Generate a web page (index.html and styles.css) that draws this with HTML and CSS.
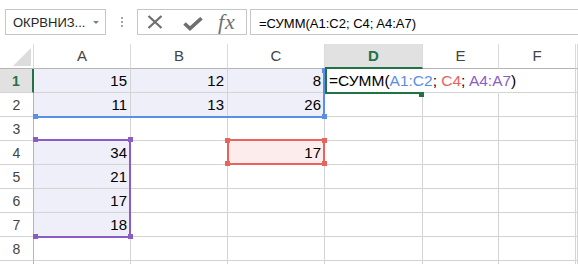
FILE: index.html
```html
<!DOCTYPE html>
<html lang="ru">
<head>
  <meta charset="UTF-8">
  <title>СУММ</title>
  <link rel="stylesheet" href="styles.css">
</head>
<body>
  <div class="fbar">
    <div class="namebox"><span>ОКРВНИЗ...</span><i class="arrow"></i></div>
    <div class="grip"><i></i><i></i><i></i></div>
    <div class="fxbox">
      <svg class="ico-x" width="16" height="14" viewBox="0 0 16 14"><path d="M1.5 1 L14.5 13 M14.5 1 L1.5 13" stroke="#6f6f6f" stroke-width="2.3" fill="none"/></svg>
      <svg class="ico-ok" width="20" height="14" viewBox="0 0 20 14"><polyline points="1.5,6.5 7,11.5 18.5,1.2" stroke="#6f6f6f" stroke-width="3.6" fill="none"/></svg>
      <span class="fx">fx</span>
    </div>
    <div class="input">=СУММ(A1:C2; C4; A4:A7)</div>
  </div>

  <div class="sheet">
    <!-- заголовки столбцов -->
    <div class="c corner"><svg width="34" height="24" viewBox="0 0 34 24"><polygon points="31,4 31,22 13,22" fill="#dcdcdc"/></svg></div>
    <div class="c ch">A</div>
    <div class="c ch">B</div>
    <div class="c ch">C</div>
    <div class="c ch sel">D</div>
    <div class="c ch">E</div>
    <div class="c ch">F</div>
    <div class="c ch"></div>

    <div class="c rh rsel">1</div>
    <div class="c n fill">15</div>
    <div class="c n fill">12</div>
    <div class="c n fill">8</div>
    <div class="c fm nob">=СУММ(<span class="b">A1:C2</span>; <span class="r">C4</span>; <span class="p">A4:A7</span>)</div>
    <div class="c nob"></div>
    <div class="c"></div>
    <div class="c"></div>

    <div class="c rh">2</div>
    <div class="c n fill">11</div>
    <div class="c n fill">13</div>
    <div class="c n fill">26</div>
    <div class="c"></div><div class="c"></div><div class="c"></div><div class="c"></div>

    <div class="c rh">3</div>
    <div class="c"></div><div class="c"></div><div class="c"></div><div class="c"></div><div class="c"></div><div class="c"></div><div class="c"></div>

    <div class="c rh">4</div>
    <div class="c n fill">34</div>
    <div class="c"></div>
    <div class="c n pink">17</div>
    <div class="c"></div><div class="c"></div><div class="c"></div><div class="c"></div>

    <div class="c rh">5</div>
    <div class="c n fill">21</div>
    <div class="c"></div><div class="c"></div><div class="c"></div><div class="c"></div><div class="c"></div><div class="c"></div>

    <div class="c rh">6</div>
    <div class="c n fill">17</div>
    <div class="c"></div><div class="c"></div><div class="c"></div><div class="c"></div><div class="c"></div><div class="c"></div>

    <div class="c rh">7</div>
    <div class="c n fill">18</div>
    <div class="c"></div><div class="c"></div><div class="c"></div><div class="c"></div><div class="c"></div><div class="c"></div>

    <div class="c rh">8</div>
    <div class="c"></div><div class="c"></div><div class="c"></div><div class="c"></div><div class="c"></div><div class="c"></div><div class="c"></div>

    <div class="c rh"></div>
    <div class="c"></div><div class="c"></div><div class="c"></div><div class="c"></div><div class="c"></div><div class="c"></div><div class="c"></div>

    <!-- рамки диапазонов из формулы -->
    <div class="rng blue"><i class="hd tr"></i><i class="hd br"></i><i class="hd bl"></i></div>
    <div class="rng purple"><i class="hd tl"></i><i class="hd tr"></i><i class="hd br"></i><i class="hd bl"></i></div>
    <div class="rng red"><i class="hd tl"></i><i class="hd tr"></i><i class="hd br"></i><i class="hd bl"></i></div>
    <div class="act"><i class="fill-hd"></i></div>
  </div>
</body>
</html>
```

FILE: styles.css
```css
body{margin:0; width:578px; height:264px; overflow:hidden; background:#fff; font-family:"Liberation Sans", Arial, sans-serif;}

/* строка формул */
.fbar{display:flex; align-items:flex-start; height:44px; padding:9px 0 0 5px; box-sizing:border-box;}
.namebox{width:101px; height:26px; box-sizing:border-box; border:1px solid #c6c6c6; display:flex; align-items:center; padding-left:7px; font-size:13px; color:#262626;}
.arrow{margin-left:auto; margin-right:6px; border-left:3px solid transparent; border-right:3px solid transparent; border-top:3px solid #808080;}
.grip{display:flex; flex-direction:column; gap:2px; margin:8px 0 0 15px;}
.grip i{width:2px; height:2px; background:#a6a6a6;}
.fxbox{margin-left:14px; width:110px; height:26px; box-sizing:border-box; border:1px solid #c6c6c6; display:flex; align-items:center;}
.ico-x{margin-left:9px;}
.ico-ok{margin:3px 0 0 20px;}
.fx{margin-left:15px; font-family:"Liberation Serif", "Times New Roman", serif; font-style:italic; font-size:22px; line-height:22px; color:#707070; letter-spacing:1px;}
.input{margin-left:3px; flex:1; margin-right:-20px; height:26px; box-sizing:border-box; border:1px solid #c6c6c6; padding:2px 0 0 8px; display:flex; align-items:center; font-size:13px; color:#000; white-space:nowrap;}

/* лист */
.sheet{position:relative; display:grid; grid-template-columns:34px 97px 97px 97px 98px 76px 77px 1fr; grid-template-rows:25px; grid-auto-rows:24px;}
.c{box-sizing:border-box; border-right:1px solid #d4d4d4; border-bottom:1px solid #d4d4d4; padding-top:1px; line-height:22px; font-size:15px; color:#000; white-space:nowrap;}
.n{text-align:right; padding-right:3px;}
.fill{background:#eeeff8;}
.pink{background:#fdecec;}
.nob{border-right-color:transparent;}
.fm{position:relative; z-index:1; padding-left:4px; font-size:15.5px;}
.fm .b{color:#5b8ee6;}
.fm .r{color:#e8625f;}
.fm .p{color:#8a5cc4;}

.corner{border-right-color:#dadada; border-bottom-color:#b5b5b5; padding:0;}
.corner svg{display:block;}
.ch{padding-top:0; line-height:24px; text-align:center; color:#444; border-right-color:#dadada; border-bottom-color:#b5b5b5;}
.ch.sel{background:#e1e1e1; border-bottom:2px solid #217346; line-height:23px; color:#217346; font-weight:bold;}
.rh{text-align:center; font-size:14px; color:#444; border-right-color:#b5b5b5;}
.rh.rsel{background:#e1e1e1; border-right:2px solid #217346; color:#217346; font-weight:bold;}

/* цветные рамки ссылок */
.rng{position:absolute; box-sizing:border-box; z-index:2; border:0 solid currentColor;}
.hd{position:absolute; width:5px; height:5px; background:currentColor;}
.blue{color:#5b8ee6; left:34px; top:24px; width:291px; height:50px; border-right-width:2px; border-bottom-width:2px;}
.blue .tr{top:0; right:-4px;}
.blue .br{bottom:-3px; right:-4px;}
.blue .bl{bottom:-3px; left:-1px;}
.purple{color:#8a5cc4; left:34px; top:95px; width:97px; height:99px; border-top-width:2px; border-right-width:2px; border-bottom-width:2px;}
.purple .tl{top:-4px; left:-1px;}
.purple .tr{top:-4px; right:-4px;}
.purple .br{bottom:-3px; right:-4px;}
.purple .bl{bottom:-3px; left:-1px;}
.red{color:#e8625f; left:227px; top:95px; width:98px; height:26px; border-width:2px;}
.red .tl{top:-3px; left:-4px;}
.red .tr{top:-3px; right:-4px;}
.red .br{bottom:-3px; right:-4px;}
.red .bl{bottom:-3px; left:-4px;}

.act{position:absolute; z-index:3; box-sizing:border-box; left:325px; top:24px; width:94px; height:26px; border-left:2px solid #217346; border-bottom:2px solid #217346;}
.fill-hd{position:absolute; left:92px; top:24px; width:5px; height:5px; background:#217346;}
```
